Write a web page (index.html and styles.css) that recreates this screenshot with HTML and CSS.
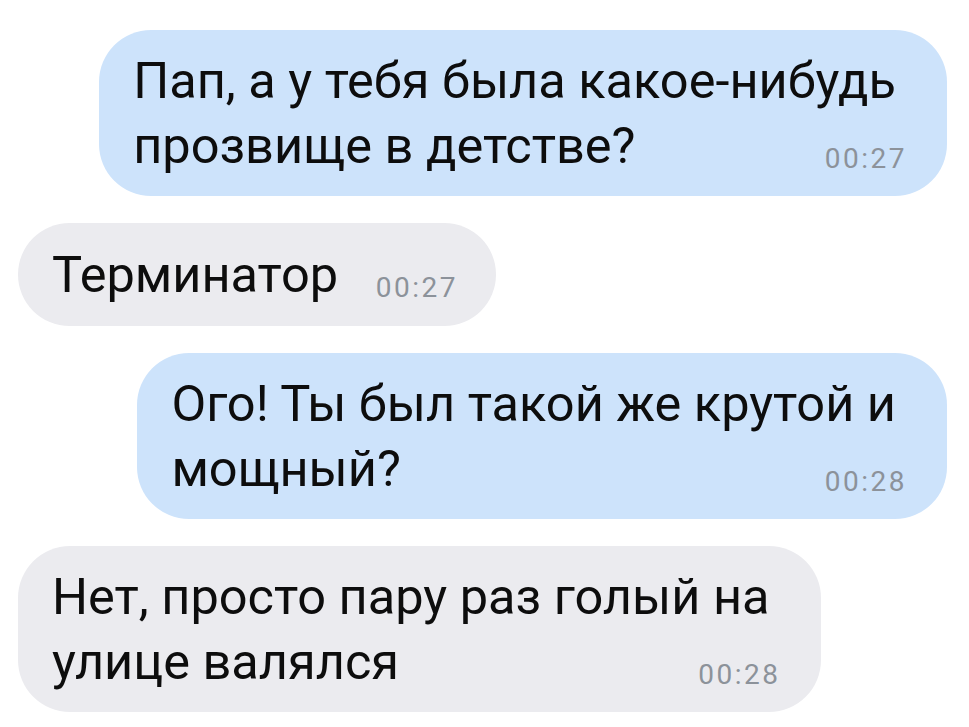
FILE: index.html
```html
<!DOCTYPE html>
<html lang="ru">
<head>
<meta charset="utf-8">
<title>Чат</title>
<link rel="stylesheet" href="styles.css">
</head>
<body>
<div class="chat">
  <div class="bubble out">
    <div class="text">Пап, а у тебя была какое-нибудь<br>прозвище в детстве?</div>
    <div class="time">00:27</div>
  </div>
  <div class="bubble in single">
    <div class="text">Терминатор<span class="spacer"></span></div>
    <div class="time">00:27</div>
  </div>
  <div class="bubble out">
    <div class="text">Ого! Ты был такой же крутой и<br>мощный?</div>
    <div class="time">00:28</div>
  </div>
  <div class="bubble in">
    <div class="text">Нет, просто пару раз голый на<br>улице валялся</div>
    <div class="time">00:28</div>
  </div>
</div>
</body>
</html>
```
FILE: styles.css
```css
html, body {
  margin: 0;
  padding: 0;
  background: #ffffff;
}
body {
  width: 969px;
  height: 727px;
  overflow: hidden;
  font-family: Roboto, "Liberation Sans", sans-serif;
  color: #0d0d0d;
}
.chat {
  display: flex;
  flex-direction: column;
  padding: 30px 22px 0 18px;
  gap: 27px;
}
.bubble {
  display: grid;
  width: fit-content;
  box-sizing: border-box;
  border-radius: 52px;
  padding: 18px 51px 18px 34px;
}
.bubble.out {
  align-self: flex-end;
  background: #cde3fb;
}
.bubble.in {
  align-self: flex-start;
  background: #ebebef;
}
.text, .time {
  grid-area: 1 / 1;
}
.text {
  font-size: 50.5px;
  line-height: 65px;
}
.time {
  justify-self: end;
  align-self: end;
  margin-right: -11px;
  margin-bottom: 5px;
  font-size: 28px;
  line-height: 28px;
  color: #8c929a;
  letter-spacing: 2.5px;
}
.bubble.single {
  padding: 19px 38px 19px 34px;
}
.bubble.single .time {
  margin-right: 0;
}
.spacer {
  display: inline-block;
  width: 120px;
}
```
